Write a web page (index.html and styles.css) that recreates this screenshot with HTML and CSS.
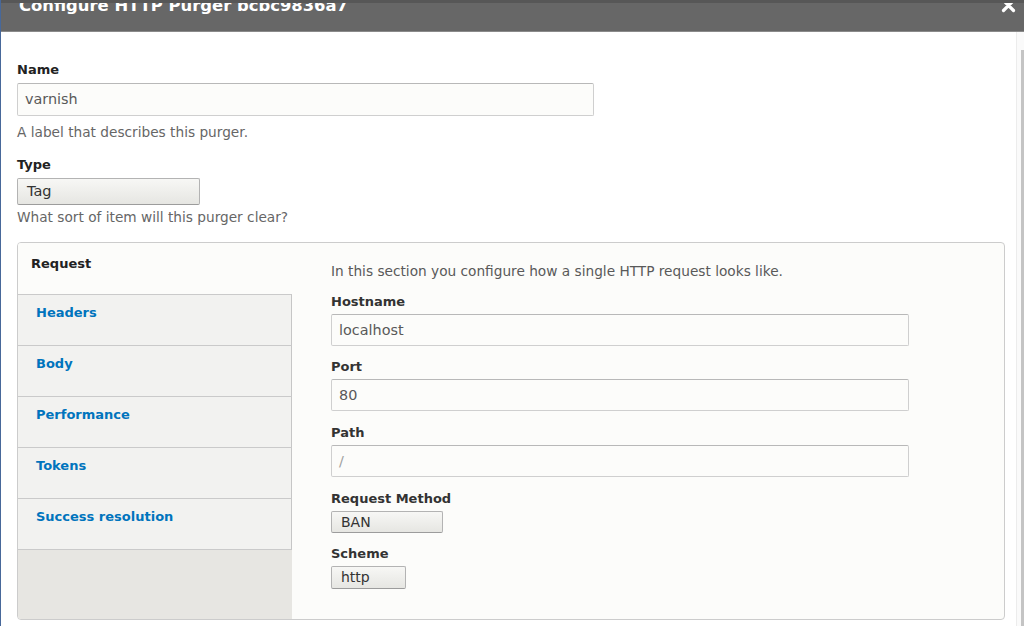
FILE: index.html
```html
<!DOCTYPE html>
<html>
<head>
<meta charset="utf-8">
<link rel="stylesheet" href="styles.css">
</head>
<body>
<div class="dialog">
  <div class="titlebar">
    <span class="title">Configure HTTP Purger bcbc9836a7</span>
    <svg class="close" width="15" height="15" viewBox="0 0 15 15"><path d="M2.5 2.5 L12.5 12.5 M12.5 2.5 L2.5 12.5" stroke="#fff" stroke-width="3.2" stroke-linecap="round"/></svg>
  </div>
  <div class="main">
    <div class="content">
      <div class="field">
        <div class="label">Name</div>
        <div class="input wide">varnish</div>
        <div class="desc">A label that describes this purger.</div>
      </div>
      <div class="field">
        <div class="label">Type</div>
        <div class="select type-select">Tag</div>
        <div class="desc desc-tight">What sort of item will this purger clear?</div>
      </div>
      <div class="vtabs">
        <div class="tab-list">
          <div class="tab active">Request</div>
          <div class="tab">Headers</div>
          <div class="tab">Body</div>
          <div class="tab">Performance</div>
          <div class="tab">Tokens</div>
          <div class="tab last">Success resolution</div>
        </div>
        <div class="pane">
          <div class="intro">In this section you configure how a single HTTP request looks like.</div>
          <div class="pfield">
            <div class="label">Hostname</div>
            <div class="input pinput">localhost</div>
          </div>
          <div class="pfield">
            <div class="label">Port</div>
            <div class="input pinput">80</div>
          </div>
          <div class="pfield loose">
            <div class="label">Path</div>
            <div class="input pinput muted">/</div>
          </div>
          <div class="pfield loose">
            <div class="label">Request Method</div>
            <div class="select small method">BAN</div>
          </div>
          <div class="pfield">
            <div class="label">Scheme</div>
            <div class="select small scheme">http</div>
          </div>
        </div>
      </div>
    </div>
    <div class="scrollbar"><div class="thumb"></div></div>
  </div>
</div>
</body>
</html>
```
FILE: styles.css
```css
html, body {
  margin: 0;
  padding: 0;
  background: #fff;
}
body {
  font-family: "DejaVu Sans", sans-serif;
  color: #333;
  width: 1024px;
  height: 626px;
  overflow: hidden;
}
.dialog {
  border-left: 1px solid #47689a;
  height: 626px;
  display: flex;
  flex-direction: column;
}
.titlebar {
  height: 32px;
  flex: 0 0 32px;
  box-sizing: border-box;
  background: #676767;
  border-top: 3px solid #575757;
  border-bottom: 1px solid #8a8a8a;
  display: flex;
  justify-content: space-between;
  align-items: flex-start;
  padding: 0 8px 0 18px;
  overflow: hidden;
}
.title {
  color: #fff;
  font-weight: bold;
  font-size: 16.4px;
  line-height: 18px;
  margin-top: -6px;
  white-space: nowrap;
}
.close {
  margin-top: -5px;
}
.main {
  flex: 1;
  display: flex;
  min-height: 0;
}
.content {
  flex: 1;
  padding: 29px 11px 0 16px;
}
.scrollbar {
  width: 7px;
  border-left: 1px solid #ececec;
  background: #fafafa;
  padding-top: 18px;
  display: flex;
  justify-content: flex-end;
}
.thumb {
  width: 3px;
  height: 600px;
  background: #c4c4c4;
}
.label {
  font-weight: bold;
  font-size: 13px;
  line-height: 18px;
  color: #222;
  margin-bottom: 4px;
}
.field + .field {
  margin-top: 15px;
}
.input {
  box-sizing: border-box;
  height: 33px;
  border: 1px solid #cfcfcf;
  border-top-color: #b8b8b8;
  border-radius: 2px;
  background: #fcfcfa;
  padding: 0 7px;
  font-size: 14.4px;
  line-height: 31px;
  color: #595959;
}
.wide {
  width: 577px;
}
.desc {
  font-size: 13.7px;
  line-height: 18px;
  color: #666;
  margin-top: 7px;
}
.desc-tight {
  margin-top: 3px;
}
.select {
  box-sizing: border-box;
  border: 1px solid #b3b3b3;
  border-bottom-color: #9c9c9c;
  border-radius: 2px;
  background: linear-gradient(#f7f7f5, #e6e6e2);
  font-size: 14.5px;
  color: #333;
}
.type-select {
  width: 183px;
  height: 27px;
  line-height: 25px;
  padding-left: 9px;
}
.vtabs {
  margin-top: 16px;
  display: flex;
  border: 1px solid #cccccc;
  border-radius: 4px;
  background: #fcfcfa;
  overflow: hidden;
}
.tab-list {
  width: 274px;
  flex: 0 0 274px;
  background: #e7e6e2;
}
.tab {
  box-sizing: border-box;
  height: 51px;
  background: #f2f2f0;
  border-top: 1px solid #cacaca;
  border-right: 1px solid #c6c6c6;
  padding: 9px 0 0 18px;
  font-weight: bold;
  font-size: 13px;
  line-height: 18px;
  color: #0074bd;
}
.tab.active {
  background: #fcfcfa;
  border-top: none;
  border-right: none;
  color: #222;
  padding: 12px 0 0 13px;
}
.tab.last {
  height: 52px;
  border-bottom: 1px solid #cacaca;
}
.pane {
  flex: 1;
  padding: 19px 0 30px 39px;
}
.intro {
  font-size: 13.7px;
  line-height: 18px;
  color: #595959;
  margin-bottom: 13px;
}
.pfield + .pfield {
  margin-top: 12px;
}
.pfield + .pfield.loose {
  margin-top: 13px;
}
.pfield .label {
  color: #333;
  margin-bottom: 3px;
}
.pinput {
  width: 578px;
  height: 32px;
  line-height: 30px;
}
.muted {
  color: #a0a0a0;
}
.small {
  height: 23px;
  line-height: 21px;
  padding-left: 9px;
  font-size: 14px;
}
.method {
  width: 112px;
  height: 22px;
  line-height: 20px;
}
.scheme {
  width: 75px;
}
```
